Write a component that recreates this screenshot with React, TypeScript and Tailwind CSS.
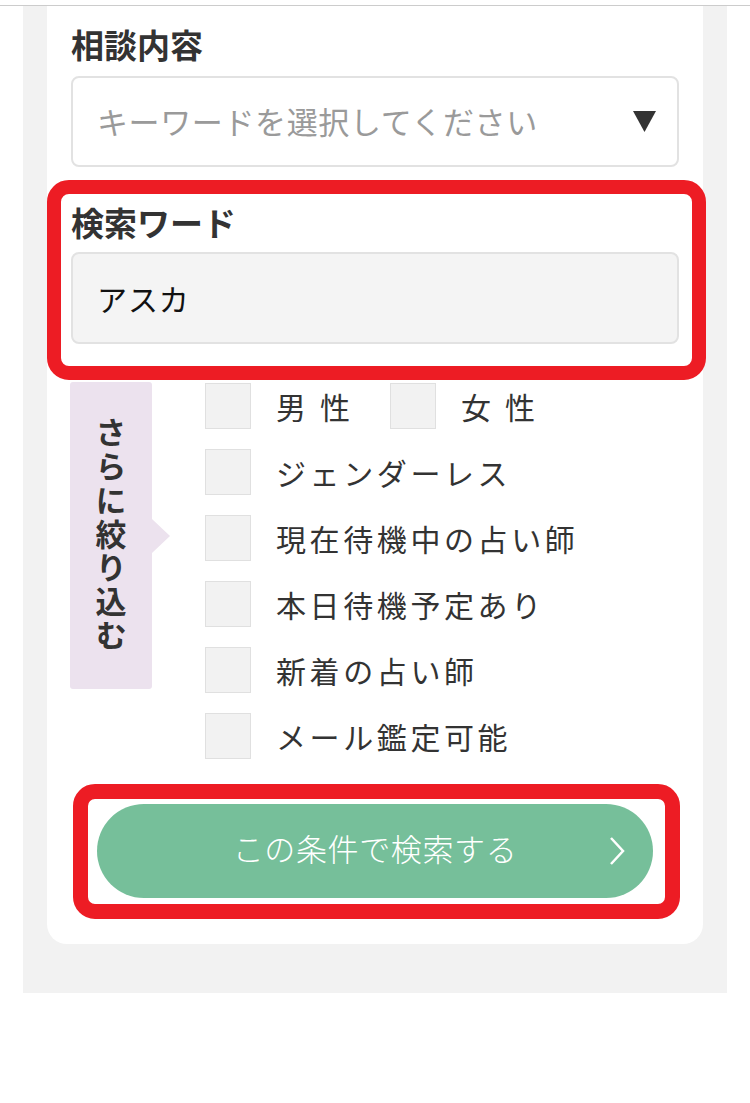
import React from "react";

const options = ["ジェンダーレス", "現在待機中の占い師", "本日待機予定あり", "新着の占い師", "メール鑑定可能"];

function Box() {
	return <span className="block w-[46px] h-[46px] shrink-0 bg-[#f2f2f2] border border-[#e0e0e0]" />;
}

function Option({ label, className = "" }: { label: string; className?: string }) {
	return (
		<div className={"flex items-center gap-[25px] h-[46px] " + className}>
			<Box />
			<span className="text-[30px] leading-none tracking-[0.12em] text-[#333]">{label}</span>
		</div>
	);
}

function App() {
	return (
		<div className="min-h-[1103px] bg-white pt-[5px] font-['Noto_Sans_CJK_JP',sans-serif]">
			<div className="border-t border-[#cccccc]">
				<div className="mx-[23px] bg-[#f2f2f2] px-[24px] pb-[49px]">
					<div className="bg-white rounded-b-[20px] px-[24px] pt-[16px] pb-[25px]">
						<h2 className="text-[33px] leading-[44px] font-bold text-[#333]">相談内容</h2>
						<div className="mt-[10px] h-[91px] flex items-center justify-between rounded-[8px] border-2 border-[#e2e2e2] pl-[24px] pr-[21px]">
							<span className="text-[31px] tracking-[0.02em] text-[#9a9a9a]">キーワードを選択してください</span>
							<svg width="23" height="21" viewBox="0 0 23 21">
								<polygon points="0,0 23,0 11.5,21" fill="#333" />
							</svg>
						</div>

						<div className="mt-[13px] ml-[-24px] mr-[-27px] border-[14px] border-[#ed1c24] rounded-[22px] bg-white pt-[6px] pb-[22px] pl-[10px] pr-[13px]">
							<h2 className="text-[33px] leading-[44px] font-bold text-[#333]">検索ワード</h2>
							<div className="mt-[8px] h-[92px] flex items-center rounded-[8px] border-2 border-[#e2e2e2] bg-[#f4f4f4] pl-[24px]">
								<span className="text-[30px] tracking-[0.03em] text-[#111]">アスカ</span>
							</div>
						</div>

						<div className="mt-[2px] flex items-start">
							<div className="relative ml-[-1px] w-[82px] h-[307px] shrink-0 flex items-center justify-center rounded-[3px] bg-[#ece2ee]">
								<span className="[writing-mode:vertical-rl] text-[31px] leading-none tracking-[0.09em] font-bold text-[#333]">
									さらに絞り込む
								</span>
								<span className="absolute left-full top-1/2 -translate-y-1/2 w-0 h-0 border-y-[17px] border-y-transparent border-l-[18px] border-l-[#ece2ee]" />
							</div>
							<div className="ml-[53px] mt-[1px] flex flex-col gap-[20px]">
								<div className="flex">
									<Option label="男 性" className="w-[185px]" />
									<Option label="女 性" />
								</div>
								{options.map((o) => (
									<Option key={o} label={o} />
								))}
							</div>
						</div>

						<div className="mt-[25px] ml-[2px] mr-[-1px] border-[15px] border-[#ed1c24] rounded-[22px] bg-white pt-[5px] pb-[6px] pl-[9px] pr-[12px]">
							<button className="relative w-full h-[94px] flex items-center justify-center rounded-full bg-[#76bf9a] text-white text-[31px] font-light tracking-[0.02em] font-['Liberation_Serif','Noto_Sans_CJK_JP',serif]">
								この条件で検索する
								<svg className="absolute right-[28px] top-1/2 -translate-y-1/2" width="16" height="30" viewBox="0 0 16 30">
									<polyline points="2,2 14,15 2,28" fill="none" stroke="#fff" strokeWidth="2.5" />
								</svg>
							</button>
						</div>
					</div>
				</div>
			</div>
		</div>
	);
}

export default App;
